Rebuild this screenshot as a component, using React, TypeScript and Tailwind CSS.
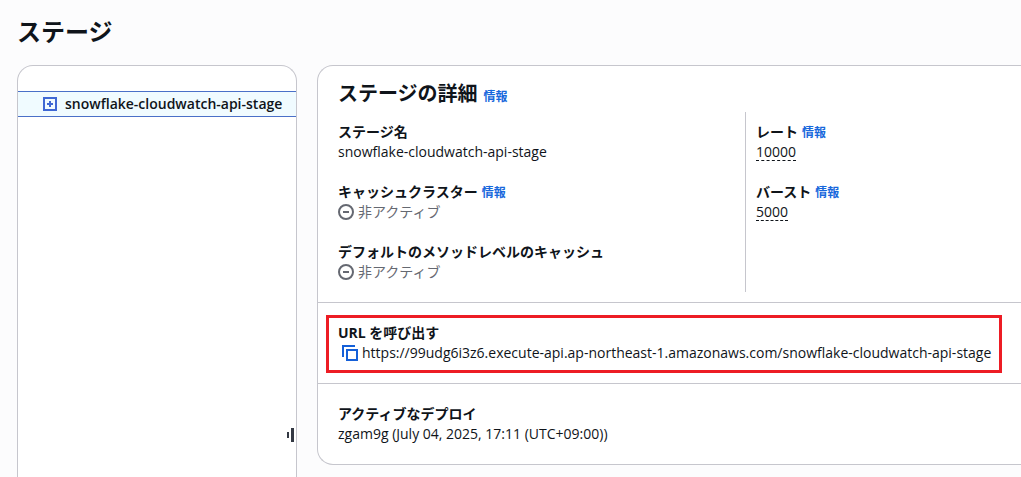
import type { ReactNode } from "react";

const STAGE = "snowflake-cloudwatch-api-stage";
const INVOKE_URL =
  "https://99udg6i3z6.execute-api.ap-northeast-1.amazonaws.com/snowflake-cloudwatch-api-stage";

function InfoLink() {
  return (
    <a href="#info" className="text-xs font-bold text-[#1868dc] hover:underline">
      情報
    </a>
  );
}

function Field({
  label,
  info,
  children,
}: {
  label: string;
  info?: boolean;
  children: ReactNode;
}) {
  return (
    <div>
      <dt className="flex h-5 items-baseline gap-1 font-bold">
        {label}
        {info && <InfoLink />}
      </dt>
      <dd className="flex h-5 items-center">{children}</dd>
    </div>
  );
}

function Inactive() {
  return (
    <span className="flex items-center gap-1 text-[#656871]">
      <svg viewBox="0 0 16 16" className="h-4 w-4" fill="none" stroke="currentColor" strokeWidth="2">
        <circle cx="8" cy="8" r="7" />
        <path d="M5 8h6" />
      </svg>
      非アクティブ
    </span>
  );
}

function Limit({ value }: { value: number }) {
  return (
    <button type="button" className="h-[18px] border-b border-dashed border-[#0f141a] leading-4">
      {value}
    </button>
  );
}

function StageTree() {
  return (
    <nav
      aria-label="ステージ"
      className="flex w-[280px] shrink-0 flex-col rounded-t-2xl border border-b-0 border-[#c6c6cd] bg-white pt-[25px]"
    >
      <div className="flex h-[26px] items-center gap-2 border-y border-[#4a70c8] bg-[#f0fbff] pl-[25px]">
        <button type="button" aria-label="展開" className="text-[#3f68d4]">
          <svg viewBox="0 0 14 14" className="h-3.5 w-3.5" fill="none" stroke="currentColor" strokeWidth="2">
            <path d="M1 1h12v12H1z" />
            <path d="M4 7h6M7 4v6" />
          </svg>
        </button>
        <a href="#stage" className="font-semibold">
          {STAGE}
        </a>
      </div>
      <button
        type="button"
        aria-label="サイズ変更"
        className="mt-auto mr-0.5 mb-[35px] self-end text-[#333843]"
      >
        <svg viewBox="0 0 7 14" className="h-3.5 w-[7px]" fill="currentColor">
          <path d="M0 4h2v6H0zM4 0h3v14H4z" />
        </svg>
      </button>
    </nav>
  );
}

function StageDetails() {
  return (
    <section className="min-w-0 flex-1 self-start rounded-l-2xl border border-r-0 border-[#c6c6cd] bg-white">
      <div className="border-b border-[#c6c6cd] pt-3 pb-2.5 pl-5">
        <div className="flex h-[34px] items-baseline gap-1.5">
          <h2 className="text-xl leading-8 font-bold">ステージの詳細</h2>
          <InfoLink />
        </div>
        <div className="grid grid-cols-[28fr_19fr]">
          <dl className="flex flex-col gap-5 py-2.5">
            <Field label="ステージ名">{STAGE}</Field>
            <Field label="キャッシュクラスター" info>
              <Inactive />
            </Field>
            <Field label="デフォルトのメソッドレベルのキャッシュ">
              <Inactive />
            </Field>
          </dl>
          <dl className="flex flex-col gap-5 border-l border-[#c6c6cd] py-2.5 pl-2.5">
            <Field label="レート" info>
              <Limit value={10000} />
            </Field>
            <Field label="バースト" info>
              <Limit value={5000} />
            </Field>
          </dl>
        </div>
      </div>

      <div className="border-b border-[#c6c6cd] pt-3 pr-[19px] pb-2.5 pl-2">
        <dl className="border-3 border-[#ed1c24] px-[9px] pt-[5px] pb-[7px]">
          <Field label="URL を呼び出す">
            <button type="button" aria-label="コピー" className="mx-1 text-[#1560d8]">
              <svg viewBox="0 0 16 16" className="h-4 w-4" fill="none" stroke="currentColor" strokeWidth="2">
                <path d="M5 5h10v10H5z" />
                <path d="M1 12V1h12" />
              </svg>
            </button>
            <span>{INVOKE_URL}</span>
          </Field>
        </dl>
      </div>

      <dl className="p-5">
        <Field label="アクティブなデプロイ">zgam9g (July 04, 2025, 17:11 (UTC+09:00))</Field>
      </dl>
    </section>
  );
}

export default function App() {
  return (
    <main className="flex min-h-screen flex-col overflow-hidden bg-[#fcfcfd] pl-[17px] font-['Open_Sans','Noto_Sans_CJK_JP',sans-serif] text-sm whitespace-nowrap text-[#0f141a]">
      <h1 className="pt-[17px] pb-[18px] text-2xl leading-[30px] font-bold">ステージ</h1>
      <div className="flex flex-1 gap-5">
        <StageTree />
        <StageDetails />
      </div>
    </main>
  );
}
